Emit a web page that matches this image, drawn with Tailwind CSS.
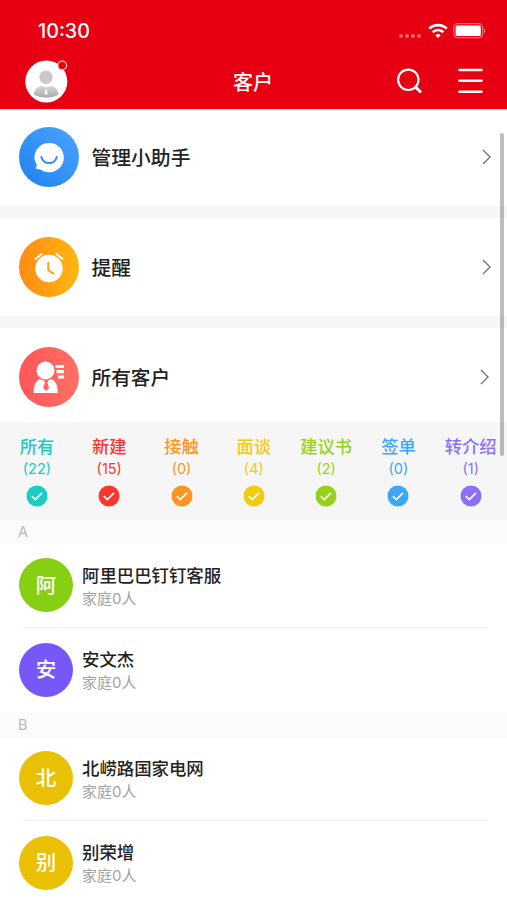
<!DOCTYPE html>
<html lang="zh-CN">
<head>
<meta charset="utf-8">
<title>客户</title>
<script src="https://cdn.jsdelivr.net/npm/@tailwindcss/browser@4"></script>
</head>
<body class="bg-white">
<svg class="hidden"><symbol id="check" viewBox="0 0 22 22"><circle cx="11" cy="11" r="10.5" fill="currentColor"/><path d="M5.8 11.2l3.500 3.300 6.700-6.700" fill="none" stroke="#fff" stroke-width="1.700"/></symbol>
<symbol id="arrow" viewBox="0 0 10 16"><path d="M1 1l7 7-7 7" fill="none" stroke="#777" stroke-width="1.4"/></symbol></svg>
<div class="relative w-[507px] h-[900px] overflow-hidden bg-white text-[#222] font-['Inter','Noto_Sans_CJK_SC',sans-serif]">
  <header class="h-[110px] bg-[#e60012] text-white border-b border-[#ffc9cd]">
    <div class="h-[62px] pl-[38px] pr-[20px] flex items-center justify-between">
      <span class="text-[19.700px] font-medium leading-none translate-y-px">10:30</span>
      <div class="flex items-center">
        <svg class="w-6 h-4 mt-2 mr-1.5" viewBox="0 0 24 16" fill="#fff" fill-opacity=".4"><circle cx="3" cy="9" r="2"/><circle cx="9" cy="9" r="2"/><circle cx="15" cy="9" r="2"/><circle cx="21" cy="9" r="2"/></svg>
        <svg class="w-5 h-4 mr-[5px]" viewBox="0 0 20 16" fill="none" stroke="#fff" stroke-width="2.6"><path d="M1.2 5.7a12.5 12.5 0 0 1 17.6 0M4.6 9.2a7.7 7.7 0 0 1 10.8 0"/><path d="M10 15l-2.7-2.8a3.9 3.9 0 0 1 5.4 0z" fill="#fff" stroke="none"/></svg>
        <svg class="w-[34px] h-4" viewBox="0 0 34 16"><rect x=".7" y=".7" width="29" height="14" rx="4" fill="none" stroke="#fff" stroke-opacity=".45" stroke-width="1.2"/><rect x="2.600" y="2.600" width="25.200" height="10.300" rx="1.5" fill="#fff"/><path d="M31.2 5.2q2 2.5 0 5z" fill="#fff" fill-opacity=".6"/></svg>
      </div>
    </div>
    <div class="h-[38px] -mt-[3px] pl-[25px] pr-[24px] grid grid-cols-[1fr_auto_1fr] items-center">
      <svg class="w-11 h-11" viewBox="0 0 44 44"><defs><linearGradient id="person" x2="0" y2="1"><stop stop-color="#d8d8d8"/><stop offset="1" stop-color="#aaa"/></linearGradient></defs><circle cx="21.3" cy="22.5" r="21" fill="#fff"/><circle cx="21" cy="18.3" r="6.7" fill="#c9c9c9"/><path d="M9 36c0-6 4-8.5 7.2-9.3q5 2.8 10 0c3.2.8 7.2 3.500 7.200 9.300q-12.200 5.500-24.400 0z" fill="url(#person)"/><path d="M19.800 31.500l1.300-1.300 1.300 1.300v4h-2.600z" fill="#fff"/><circle cx="37.200" cy="6.500" r="4.400" fill="#e60012" stroke="#ffd5d8" stroke-width="1.300"/></svg>
      <h1 class="text-[20px] leading-none font-medium translate-y-[2px] -translate-x-px">客户</h1>
      <div class="flex items-center justify-end gap-[35px]">
        <svg class="w-[26px] h-[26px]" viewBox="0 0 26 26" fill="none" stroke="#fff"><circle cx="11.300" cy="11.800" r="10.200" stroke-width="2.200"/><path d="M18.500 19l5.500 5.500" stroke-width="3"/></svg>
        <svg class="w-[25px] h-[26px]" viewBox="0 0 25 26" stroke="#fff" stroke-width="2.600" stroke-linecap="round"><path d="M1.500 2h22M1.500 12.700h22M1.500 23.700h22"/></svg>
      </div>
    </div>
  </header>

  <main>
    <section class="h-[108px] pl-[19px] pr-[15px] pb-[2px] flex items-center border-b-[12px] border-[#f6f6f6]">
      <svg class="w-[60px] h-[60px] mr-[12.500px]" viewBox="0 0 60 60"><defs><linearGradient id="blue" x1="0" y1="1" x2="1" y2="0"><stop stop-color="#1e82ef"/><stop offset="1" stop-color="#4da3ff"/></linearGradient></defs><circle cx="30" cy="30" r="30" fill="url(#blue)"/><path d="M15.500 32a14.700 14.700 0 1 1 6 10.500q-2.500 0-5-1 2-2 1-4.500-1.500-2.500-2-5z" fill="#fff"/><path d="M22.300 30a8 8 0 0 0 15.500 0" fill="none" stroke="#2b8cf4" stroke-width="2" stroke-linecap="round"/></svg>
      <span class="text-[19.800px] leading-none font-medium grow translate-y-[2px]">管理小助手</span>
      <svg class="w-[10px] h-4"><use href="#arrow"/></svg>
    </section>
    <section class="h-[110px] pl-[19px] pr-[15px] flex items-center border-b-[12px] border-[#f6f6f6]">
      <svg class="w-[60px] h-[60px] mr-[12.500px]" viewBox="0 0 60 60"><defs><linearGradient id="orange" x1="0" y1="0" x2="1" y2="0"><stop stop-color="#ff8b13"/><stop offset="1" stop-color="#ffb711"/></linearGradient></defs><circle cx="30" cy="30" r="30" fill="url(#orange)"/><circle cx="30" cy="31.500" r="13.700" fill="#fff"/><path d="M15.800 22.500l7.500-6M36.700 16.500l7.500 6" stroke="#fff" stroke-width="2"/><path d="M29.300 25v8.300l6 3.700" fill="none" stroke="#ff9e13" stroke-width="2"/></svg>
      <span class="text-[19.800px] leading-none font-medium grow translate-y-[2px]">提醒</span>
      <svg class="w-[10px] h-4"><use href="#arrow"/></svg>
    </section>
    <section class="h-[94px] pl-[19px] pr-[17.500px] pt-[3px] flex items-center">
      <svg class="w-[60px] h-[60px] mr-[12.500px]" viewBox="0 0 60 60"><defs><linearGradient id="red" x1="0" y1="0" x2="1" y2="0"><stop stop-color="#ff5558"/><stop offset="1" stop-color="#ff7163"/></linearGradient></defs><circle cx="30" cy="30" r="30" fill="url(#red)"/><circle cx="26.500" cy="23.500" r="9" fill="#fff"/><path d="M14.500 46c0-8 2.500-12 6.500-14q6 3 11.500 0c4 2 6.200 6 6.200 14z" fill="#fff"/><path d="M25 33h4.200l-.8 3 1.700 5-3 3-3-3 1.700-5z" fill="#ff6260"/><path d="M36.500 19.500h8.500M37.500 24.700h7.500M39 30h6" stroke="#fff" stroke-width="3.200"/></svg>
      <span class="text-[19.700px] leading-none font-medium grow translate-y-[2px]">所有客户</span>
      <svg class="w-[10px] h-4"><use href="#arrow"/></svg>
    </section>

    <nav class="h-[98px] pt-[15px] pl-[.800px] bg-[#f6f6f6] grid grid-cols-[repeat(7,72.300px)] text-center leading-none *:flex *:flex-col *:items-center">
      <div class="text-[#1accc4]"><b class="text-[17.300px] leading-5 font-medium whitespace-nowrap">所有</b><span class="text-[14.500px] mt-[4px] leading-4">(22)</span><svg class="w-[22px] h-[22px] mt-[7.500px]"><use href="#check"/></svg></div>
      <div class="text-[#f83830]"><b class="text-[17.300px] leading-5 font-medium whitespace-nowrap">新建</b><span class="text-[14.500px] mt-[4px] leading-4">(15)</span><svg class="w-[22px] h-[22px] mt-[7.500px]"><use href="#check"/></svg></div>
      <div class="text-[#fb951f]"><b class="text-[17.300px] leading-5 font-medium whitespace-nowrap">接触</b><span class="text-[14.500px] mt-[4px] leading-4">(0)</span><svg class="w-[22px] h-[22px] mt-[7.500px]"><use href="#check"/></svg></div>
      <div class="text-[#f2cb0a]"><b class="text-[17.300px] leading-5 font-medium whitespace-nowrap">面谈</b><span class="text-[14.500px] mt-[4px] leading-4">(4)</span><svg class="w-[22px] h-[22px] mt-[7.500px]"><use href="#check"/></svg></div>
      <div class="text-[#96d219]"><b class="text-[17.300px] leading-5 font-medium whitespace-nowrap">建议书</b><span class="text-[14.500px] mt-[4px] leading-4">(2)</span><svg class="w-[22px] h-[22px] mt-[7.500px]"><use href="#check"/></svg></div>
      <div class="text-[#3ba9f1]"><b class="text-[17.300px] leading-5 font-medium whitespace-nowrap">签单</b><span class="text-[14.500px] mt-[4px] leading-4">(0)</span><svg class="w-[22px] h-[22px] mt-[7.500px]"><use href="#check"/></svg></div>
      <div class="text-[#8b70f5]"><b class="text-[17.300px] leading-5 font-medium whitespace-nowrap">转介绍</b><span class="text-[14.500px] mt-[4px] leading-4">(1)</span><svg class="w-[22px] h-[22px] mt-[7.500px]"><use href="#check"/></svg></div>
    </nav>

    <h2 class="h-6 pl-[18px] bg-[#fbfbfb] text-[#b9b9b9] text-[14.500px] leading-6">A</h2>
    <article class="h-[84px] mx-[19px] pb-px flex items-center gap-[9px] border-b border-[#f4f4f4]">
      <div class="size-[54px] rounded-full bg-[#87cf13] text-white text-[20.500px] font-medium pt-[2px] flex items-center justify-center">阿</div>
      <div class="pt-[2px]"><p class="text-[17.400px] leading-6 font-medium">阿里巴巴钉钉客服</p><p class="text-[15px] leading-[21px] text-[#a3a3a3]">家庭0人</p></div>
    </article>
    <article class="h-[84px] mx-[19px] pb-px flex items-center gap-[9px]">
      <div class="size-[54px] rounded-full bg-[#7658f8] text-white text-[20.500px] font-medium pt-[2px] flex items-center justify-center">安</div>
      <div class="pt-[2px]"><p class="text-[17.400px] leading-6 font-medium">安文杰</p><p class="text-[15px] leading-[21px] text-[#a3a3a3]">家庭0人</p></div>
    </article>
    <h2 class="h-[25px] pl-[18px] bg-[#fbfbfb] text-[#b9b9b9] text-[14.500px] leading-[25px]">B</h2>
    <article class="h-[84px] mx-[19px] pb-px flex items-center gap-[9px] border-b border-[#f4f4f4]">
      <div class="size-[54px] rounded-full bg-[#eac005] text-white text-[20.500px] font-medium pt-[2px] flex items-center justify-center">北</div>
      <div class="pt-[2px]"><p class="text-[17.400px] leading-6 font-medium">北崂路国家电网</p><p class="text-[15px] leading-[21px] text-[#a3a3a3]">家庭0人</p></div>
    </article>
    <article class="h-[84px] mx-[19px] pb-px flex items-center gap-[9px]">
      <div class="size-[54px] rounded-full bg-[#eac005] text-white text-[20.500px] font-medium pt-[2px] flex items-center justify-center">别</div>
      <div class="pt-[2px]"><p class="text-[17.400px] leading-6 font-medium">别荣增</p><p class="text-[15px] leading-[21px] text-[#a3a3a3]">家庭0人</p></div>
    </article>
  </main>
  <div class="absolute top-[133px] right-[3px] w-1 h-[323px] rounded-full bg-black/25"></div>
</div>
</body>
</html>
